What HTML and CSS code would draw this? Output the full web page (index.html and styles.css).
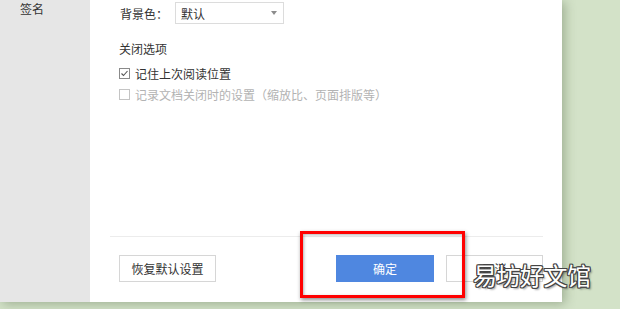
FILE: index.html
```html
<!DOCTYPE html>
<html lang="zh-CN">
<head>
<meta charset="utf-8">
<title>设置</title>
<link rel="stylesheet" href="styles.css">
</head>
<body>
<div class="dialog">
  <aside class="sidebar">
    <div class="side-item">签名</div>
  </aside>
  <section class="main">
    <div class="field-row">
      <span class="label">背景色：</span>
      <div class="select"><span>默认</span><i class="arrow"></i></div>
    </div>
    <div class="group-title">关闭选项</div>
    <label class="check-row">
      <svg class="box" width="11" height="11" viewBox="0 0 11 11"><rect x="0.5" y="0.5" width="10" height="10" fill="#fff" stroke="#8a8a8a"/><path d="M2.5 5.5 L4.5 7.5 L8.5 3" fill="none" stroke="#555" stroke-width="1.1"/></svg>
      <span>记住上次阅读位置</span>
    </label>
    <label class="check-row disabled">
      <svg class="box" width="11" height="11" viewBox="0 0 11 11"><rect x="0.5" y="0.5" width="10" height="10" fill="#fff" stroke="#c4c4c4"/></svg>
      <span>记录文档关闭时的设置（缩放比、页面排版等）</span>
    </label>
    <div class="footer">
      <button class="btn">恢复默认设置</button>
      <div class="right-btns">
        <button class="btn primary">确定</button>
        <button class="btn">取消</button>
      </div>
    </div>
  </section>
</div>
<div class="highlight"></div>
<div class="watermark">易坊好文馆</div>
</body>
</html>
```

FILE: styles.css
```css
* { box-sizing: border-box; }
html, body { margin: 0; padding: 0; }
body {
  width: 620px;
  height: 309px;
  overflow: hidden;
  background: #d3e2c8;
  font-family: "Microsoft YaHei", "Noto Sans CJK SC", "Noto Sans", sans-serif;
  font-size: 12px;
  color: #333;
  position: relative;
}
.dialog {
  width: 562px;
  height: 302px;
  display: flex;
  background: #fff;
  box-shadow: 3px 2px 10px rgba(60, 80, 50, 0.35);
}
.sidebar {
  width: 90px;
  background: #e6e6e6;
  flex: none;
}
.side-item {
  padding-left: 20px;
  line-height: 18px;
  color: #333;
}
.main {
  flex: 1;
  display: flex;
  flex-direction: column;
  padding-top: 2px;
}
.field-row {
  display: flex;
  align-items: center;
  height: 22px;
  padding-left: 30px;
}
.label { width: 55px; }
.select {
  width: 109px;
  height: 22px;
  border: 1px solid #dcdcdc;
  display: flex;
  align-items: center;
  justify-content: space-between;
  padding: 0 6px 0 5px;
  color: #333;
}
.arrow {
  width: 0; height: 0;
  border-left: 3px solid transparent;
  border-right: 3px solid transparent;
  border-top: 4px solid #8c8c8c;
}
.group-title {
  margin-top: 16px;
  padding-left: 29px;
  line-height: 18px;
  color: #333;
}
.check-row {
  display: flex;
  align-items: center;
  gap: 5px;
  height: 20px;
  padding-left: 29px;
  color: #333;
}
.group-title + .check-row { margin-top: 5px; }
.check-row.disabled { color: #b3b3b3; margin-top: 1px; }
.box { flex: none; display: block; }
.footer {
  margin: auto 19px 0 20px;
  border-top: 1px solid #ececec;
  padding: 18px 0 20px 9px;
  display: flex;
  justify-content: space-between;
}
.right-btns { display: flex; gap: 12px; }
.btn {
  width: 97px;
  height: 27px;
  border: 1px solid #d6d6d6;
  background: #fff;
  font-family: inherit;
  font-size: 12px;
  color: #333;
  padding: 0;
}
.btn.primary {
  width: 98px;
  background: #4f87e0;
  border-color: #4f87e0;
  color: #fff;
}
.highlight {
  position: absolute;
  left: 300px;
  top: 231px;
  width: 165px;
  height: 67px;
  border: 3px solid #ff0000;
  box-shadow: 1px 2px 4px rgba(0, 0, 0, 0.45), inset 1px 1px 3px rgba(0, 0, 0, 0.3);
}
.watermark {
  position: absolute;
  left: 473px;
  top: 258px;
  font-size: 24px;
  line-height: 34px;
  color: #fff;
  letter-spacing: -0.5px;
  text-shadow:
    1px 0 0 #444, -1px 0 0 #444, 0 1px 0 #444, 0 -1px 0 #444,
    1px 1px 0 #444, -1px -1px 0 #444, 1px -1px 0 #444, -1px 1px 0 #444,
    2px 2px 2px rgba(0,0,0,0.4);
}
```
